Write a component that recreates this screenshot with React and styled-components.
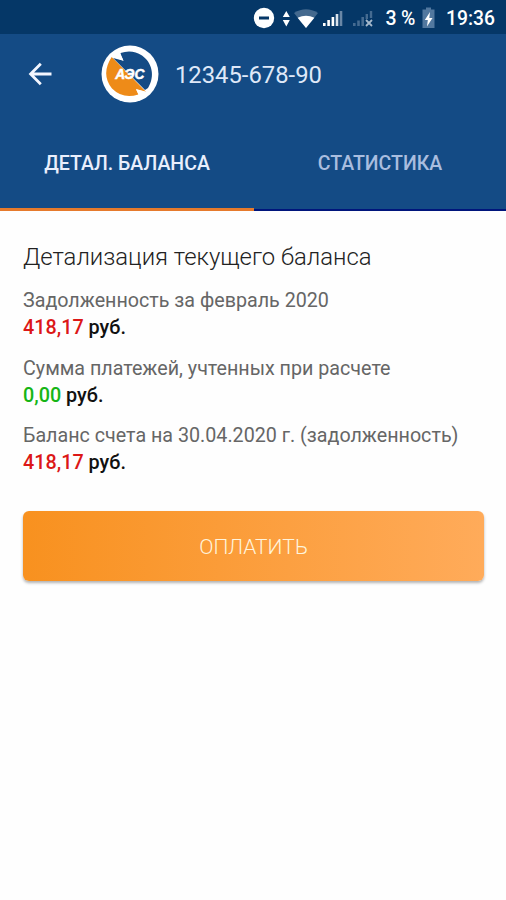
import React from 'react';
import styled, { createGlobalStyle } from 'styled-components';

const GlobalStyle = createGlobalStyle`
  * { box-sizing: border-box; }
  body { margin: 0; background: #fefefe; font-family: Roboto, "Noto Sans", sans-serif; }
`;

const Screen = styled.div`
  width: 506px;
  height: 900px;
  overflow: hidden;
  background: #fefefe;
`;

const StatusBar = styled.div`
  height: 34px;
  padding: 3px 11px 0 0;
  display: flex;
  align-items: center;
  justify-content: flex-end;
  background: #053767;
  color: #fff;
  svg { display: block; flex: none; }
`;

const Charge = styled.span`
  margin: 0 7px 0 0;
  font-size: 19.5px;
  line-height: 31px;
  font-weight: 500;
  letter-spacing: -0.2px;
  white-space: nowrap;
`;

const Clock = styled.time`
  margin-left: 11px;
  font-size: 19.3px;
  line-height: 31px;
  font-weight: 500;
`;

const Header = styled.header`
  height: 177px;
  background: #144b85;
  display: flex;
  flex-direction: column;
`;

const Toolbar = styled.div`
  height: 80px;
  padding-left: 28px;
  display: flex;
  align-items: center;
  svg { display: block; flex: none; }
`;

const Back = styled.button`
  border: 0;
  padding: 0;
  margin-right: 49px;
  background: none;
`;

const Account = styled.h1`
  margin: 2px 0 0 16px;
  font-size: 23.8px;
  line-height: 32px;
  font-weight: 400;
  color: #dfe8f8;
`;

const Tabs = styled.nav`
  flex: 1;
  display: grid;
  grid-template-columns: 254px 252px;
`;

const Tab = styled.button`
  border: 0;
  border-bottom: ${(p) => (p.$active ? '3px solid #e67a2c' : '2px solid #00157c')};
  padding: ${(p) => (p.$active ? 6 : 5)}px 0 0;
  background: none;
  font: 500 19.5px/30px Roboto, sans-serif;
  color: ${(p) => (p.$active ? '#e9effd' : '#a9bddf')};
`;

const Content = styled.main`
  padding: 30px 22px 0 23px;
`;

const Heading = styled.h2`
  margin: 0 0 14px;
  font-size: 23.85px;
  line-height: 32px;
  font-weight: 300;
  color: #222;
  white-space: nowrap;
`;

const Entry = styled.section`
  height: 67.5px;
  white-space: nowrap;
`;

const Label = styled.div`
  font-size: 19.7px;
  line-height: 27px;
  color: #666;
`;

const Amount = styled.div`
  font-size: 19.8px;
  line-height: 27px;
  font-weight: 500;
  color: #111;
`;

const Value = styled.span`
  color: ${(p) => (p.$tone === 'paid' ? '#16b516' : '#dc1717')};
`;

const PayButton = styled.button`
  display: block;
  width: 461px;
  height: 69.5px;
  margin-top: 21.5px;
  padding: 2px 0 0;
  border: 0;
  border-radius: 6px;
  background: linear-gradient(90deg, #f8911f, #ffab5a);
  box-shadow: 0 2px 3px rgba(0, 0, 0, 0.3);
  color: #fff4dc;
  font: 300 21px/30px Roboto, sans-serif;
`;

function StatusIcons() {
  return (
    <svg width="132" height="30" viewBox="0 0 132 30">
      <circle cx="11" cy="14" r="10.2" fill="#fff" />
      <rect x="6" y="12.5" width="10" height="3" fill="#053767" />
      <path d="M29.8 13 33.3 7l3.5 6zM29.8 16 33.3 22.5l3.5-6.5z" fill="#fff" />
      <path d="M41 9Q53 1.5 65 9L53 24z" fill="#44698e" />
      <path d="M44.6 13.8Q53 9.8 61.4 13.8L53 24z" fill="#fff" />
      <path d="M70 22v-3h2.6v3zM74.3 22v-6h2.6v6zM78.6 22v-9h2.6v9z" fill="#fff" />
      <path d="M82.7 22V10h2.6v12z" fill="#d7e1eb" />
      <path d="M86.7 22V7h2.6v15z" fill="#6a87a6" />
      <path d="M100 22v-3h2.6v3zM104.2 22v-5.5h2.6V22zM108.4 22v-9h2.6v9zM112.6 15v-5h2.4v5zM116.8 14V7h2.4v7z" fill="#456b91" />
      <path d="m113 16 6 6m0-6-6 6" stroke="#a5b8cb" strokeWidth="1.8" />
    </svg>
  );
}

function BatteryIcon() {
  return (
    <svg width="13" height="24" viewBox="0 0 13 24">
      <path d="M4 .5h5v2h3.5v18.5H.5V2.5H4z" fill="#52789f" />
      <path d="M8 5 2.8 13h3L5 19.5l5.5-8.5H7.3z" fill="#fff" />
    </svg>
  );
}

function BackIcon() {
  return (
    <svg width="24" height="24" viewBox="0 0 24 24" fill="none" stroke="#f3f6ff" strokeWidth="2.8">
      <path d="M23.5 12H3M12.8 1.8 2.6 12l10.2 10.2" />
    </svg>
  );
}

function Logo() {
  return (
    <svg width="58" height="58" viewBox="0 0 58 58">
      <circle cx="29" cy="29" r="28.5" fill="#fff" />
      <path d="M19.5 8Q31 4 41 10.5C51 17.5 54.5 31 47 43L44 45 12 13l10.5 2.7-2.2-5.2z" fill="#144b85" />
      <path d="M10.7 12 45.2 47 35 44.2l2.3 5.3Q22 54.5 11 43.5-.5 29 10.7 12z" fill="#ee8b18" />
      <path d="m10 11 12.5 4.7-3-6-7-.5zM48 47.5l-13-3.6 3 6 5.5.5z" fill="#fff" />
      <text x="28.8" y="33.5" textAnchor="middle" textLength="29" lengthAdjust="spacingAndGlyphs" fill="#fff" stroke="#fff" strokeWidth="0.5" fontFamily="Liberation Sans, sans-serif" fontSize="14" fontWeight="700" fontStyle="italic">АЭС</text>
    </svg>
  );
}

const entries = [
  { label: 'Задолженность за февраль 2020', value: '418,17', tone: 'debt' },
  { label: 'Сумма платежей, учтенных при расчете', value: '0,00', tone: 'paid' },
  { label: 'Баланс счета на 30.04.2020 г. (задолженность)', value: '418,17', tone: 'debt' },
];

export default function App() {
  return (
    <Screen>
      <GlobalStyle />
      <StatusBar>
        <StatusIcons />
        <Charge>3 %</Charge>
        <BatteryIcon />
        <Clock>19:36</Clock>
      </StatusBar>
      <Header>
        <Toolbar>
          <Back aria-label="Назад"><BackIcon /></Back>
          <Logo />
          <Account>12345-678-90</Account>
        </Toolbar>
        <Tabs>
          <Tab $active>ДЕТАЛ. БАЛАНСА</Tab>
          <Tab>СТАТИСТИКА</Tab>
        </Tabs>
      </Header>
      <Content>
        <Heading>Детализация текущего баланса</Heading>
        {entries.map((e) => (
          <Entry key={e.label}>
            <Label>{e.label}</Label>
            <Amount><Value $tone={e.tone}>{e.value}</Value> руб.</Amount>
          </Entry>
        ))}
        <PayButton>ОПЛАТИТЬ</PayButton>
      </Content>
    </Screen>
  );
}
